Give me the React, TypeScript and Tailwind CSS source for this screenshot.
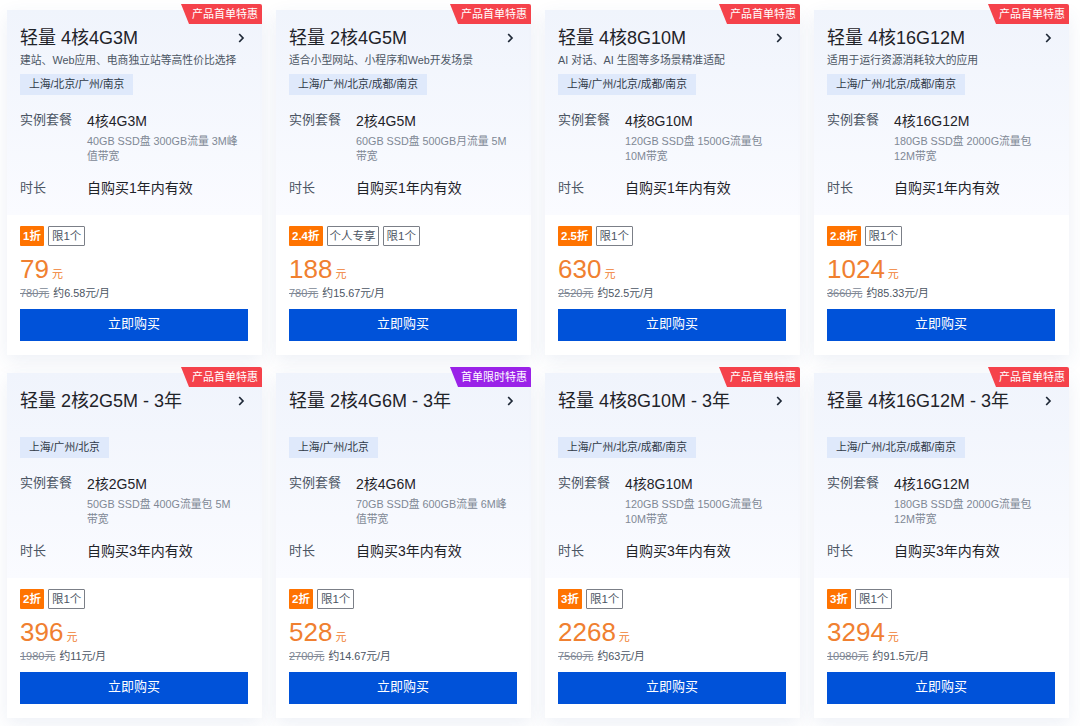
const FONT = "font-['Liberation_Sans','Noto_Sans_CJK_SC',sans-serif]";

interface Plan {
  title: string;
  desc?: string;
  regions: string;
  spec: string;
  detail: string;
  years: number;
  discount: string;
  personal?: boolean;
  price: string;
  original: string;
  monthly: string;
  purple?: boolean;
}

const plans: Plan[] = [
  { title: "轻量 4核4G3M", desc: "建站、Web应用、电商独立站等高性价比选择", regions: "上海/北京/广州/南京", spec: "4核4G3M", detail: "40GB SSD盘 300GB流量 3M峰值带宽", years: 1, discount: "1折", price: "79", original: "780元", monthly: "约6.58元/月" },
  { title: "轻量 2核4G5M", desc: "适合小型网站、小程序和Web开发场景", regions: "上海/广州/北京/成都/南京", spec: "2核4G5M", detail: "60GB SSD盘 500GB月流量 5M带宽", years: 1, discount: "2.4折", personal: true, price: "188", original: "780元", monthly: "约15.67元/月" },
  { title: "轻量 4核8G10M", desc: "AI 对话、AI 生图等多场景精准适配", regions: "上海/广州/北京/成都/南京", spec: "4核8G10M", detail: "120GB SSD盘 1500G流量包 10M带宽", years: 1, discount: "2.5折", price: "630", original: "2520元", monthly: "约52.5元/月" },
  { title: "轻量 4核16G12M", desc: "适用于运行资源消耗较大的应用", regions: "上海/广州/北京/成都/南京", spec: "4核16G12M", detail: "180GB SSD盘 2000G流量包 12M带宽", years: 1, discount: "2.8折", price: "1024", original: "3660元", monthly: "约85.33元/月" },
  { title: "轻量 2核2G5M - 3年", regions: "上海/广州/北京", spec: "2核2G5M", detail: "50GB SSD盘 400G流量包 5M带宽", years: 3, discount: "2折", price: "396", original: "1980元", monthly: "约11元/月" },
  { title: "轻量 2核4G6M - 3年", regions: "上海/广州/北京", spec: "2核4G6M", detail: "70GB SSD盘 600GB流量 6M峰值带宽", years: 3, discount: "2折", price: "528", original: "2700元", monthly: "约14.67元/月", purple: true },
  { title: "轻量 4核8G10M - 3年", regions: "上海/广州/北京/成都/南京", spec: "4核8G10M", detail: "120GB SSD盘 1500G流量包 10M带宽", years: 3, discount: "3折", price: "2268", original: "7560元", monthly: "约63元/月" },
  { title: "轻量 4核16G12M - 3年", regions: "上海/广州/北京/成都/南京", spec: "4核16G12M", detail: "180GB SSD盘 2000G流量包 12M带宽", years: 3, discount: "3折", price: "3294", original: "10980元", monthly: "约91.5元/月" },
];

function Chevron() {
  return (
    <svg width="7" height="10" viewBox="0 0 7 10" fill="none">
      <path d="M1.2 1 5 5 1.2 9" stroke="#1f2937" strokeWidth="1.7" />
    </svg>
  );
}

function PlanCard({ plan }: { plan: Plan }) {
  return (
    <div className="relative h-[345px] bg-white shadow-[0_6px_18px_rgba(55,85,150,0.09)]">
      <div
        className={
          "absolute -top-[6px] right-0 z-10 flex h-[20px] w-[81px] items-center justify-end rounded-tr-[2px] pr-[4px] text-[11px] leading-none text-white [clip-path:polygon(0_0,100%_0,100%_100%,8px_100%)] " +
          (plan.purple ? "bg-[#9a22e8]" : "bg-[#f5424b]")
        }
      >
        {plan.purple ? "首单限时特惠" : "产品首单特惠"}
      </div>
      <div className="flex h-[205px] flex-col bg-gradient-to-b from-[#f0f4fc] to-[#fafbff] px-[13px] pt-[15px]">
        <div className="flex h-[26px] items-center justify-between pr-[4px]">
          <span className="text-[18px] leading-[26px] text-[#1f2329]">{plan.title}</span>
          <Chevron />
        </div>
        <p className="mt-[1px] h-[16px] text-[10.8px] leading-[16px] text-[#4b5563]">{plan.desc}</p>
        <div className="mt-[6px] h-[21px] w-fit bg-[#dfe9fb] px-[9px] text-[10.8px] leading-[21px] text-[#2f3947]">
          {plan.regions}
        </div>
        <div className="mt-[16px] flex">
          <span className="w-[67px] shrink-0 text-[13px] leading-[18px] text-[#4b5563]">实例套餐</span>
          <div>
            <p className="text-[14px] leading-[20px] text-[#1f2329]">{plan.spec}</p>
            <p className="mt-[3px] w-[152px] text-[10.8px] leading-[15px] text-[#808895]">{plan.detail}</p>
          </div>
        </div>
        <div className="mt-[14px] flex">
          <span className="w-[67px] shrink-0 text-[13px] leading-[20px] text-[#4b5563]">时长</span>
          <span className="text-[14px] leading-[20px] text-[#1f2329]">自购买{plan.years}年内有效</span>
        </div>
      </div>
      <div className="pl-[13px] pr-[14px] pt-[11px]">
        <div className="flex gap-[4px] text-[11.5px] leading-[18px]">
          <span className="h-[20px] rounded-[1px] bg-[#ff7300] px-[3px] font-bold leading-[20px] text-white">{plan.discount}</span>
          {plan.personal && (
            <span className="h-[20px] rounded-[1px] border border-[#7b7f87] px-[2px] text-[#4b5563]">个人专享</span>
          )}
          <span className="h-[20px] rounded-[1px] border border-[#7b7f87] px-[3px] text-[#4b5563]">限1个</span>
        </div>
        <div className="mt-[9px] flex h-[28px] items-end text-[#f08030]">
          <span className="text-[26px] leading-[28px]">{plan.price}</span>
          <span className="mb-[1px] ml-[3px] text-[11px] leading-[16px]">元</span>
        </div>
        <div className="mt-[2px] flex h-[16px] items-center gap-[4px] leading-[16px]">
          <span className="text-[11px] text-[#808895] line-through">{plan.original}</span>
          <span className="text-[10.8px] text-[#4b5563]">{plan.monthly}</span>
        </div>
        <button className="mt-[8px] block h-[32px] w-full bg-[#0052d9] pb-[2px] text-[13px] text-white">立即购买</button>
      </div>
    </div>
  );
}

export default function App() {
  return (
    <div className={FONT + " h-[726px] w-[1080px] overflow-hidden bg-white px-[7px] pt-[10px]"}>
      <div className="grid grid-cols-[repeat(4,255px)] gap-x-[14px] gap-y-[18px]">
        {plans.map((plan) => (
          <PlanCard key={plan.title} plan={plan} />
        ))}
      </div>
    </div>
  );
}
